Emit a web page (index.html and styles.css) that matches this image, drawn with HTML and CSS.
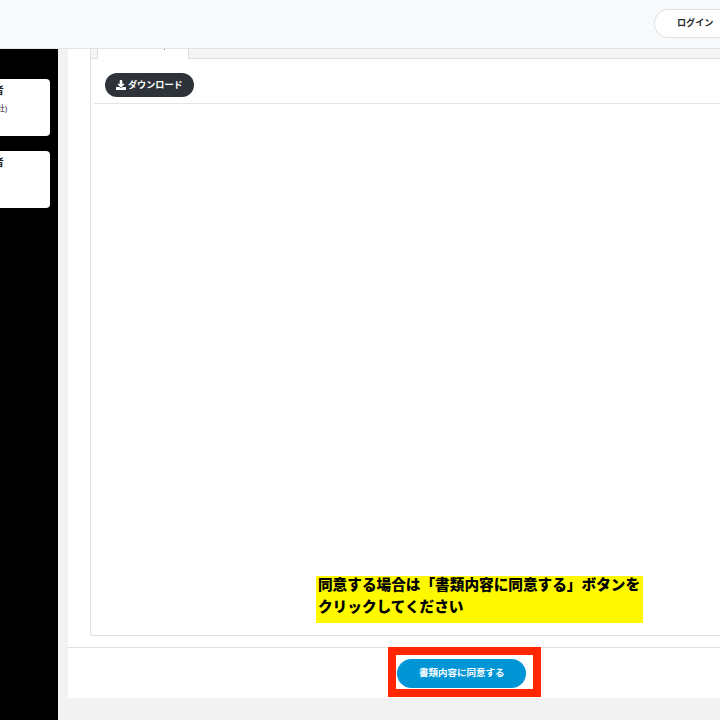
FILE: index.html
```html
<!DOCTYPE html>
<html lang="ja">
<head>
<meta charset="utf-8">
<title>書類内容の確認</title>
<link rel="stylesheet" href="styles.css">
</head>
<body>
<header class="topbar"><button class="login">ログイン</button></header>
<div class="layout">
  <aside class="sidebar">
    <section class="party"><h2>者</h2><p>社)</p></section>
    <section class="party"><h2>者</h2></section>
  </aside>
  <main class="content">
    <div class="viewer">
      <div class="tabs"><div class="tab"><i class="tab-mark"></i></div></div>
      <div class="toolbar">
        <button class="download">
          <svg viewBox="0 0 512 512" aria-hidden="true"><path fill="currentColor" d="M216 0h80c13 0 24 11 24 24v168h88c18 0 27 21 14 34L270 378c-7 7-20 7-27 0L90 226c-13-13-4-34 14-34h88V24c0-13 11-24 24-24zm296 376v112c0 13-11 24-24 24H24c-13 0-24-11-24-24V376c0-13 11-24 24-24h147l49 49c20 20 52 20 72 0l49-49h147c13 0 24 11 24 24z"/></svg>
          <span>ダウンロード</span>
        </button>
      </div>
      <div class="document">
        <div class="note"><p>同意する場合は「書類内容に同意する」ボタンを<br>クリックしてください</p></div>
      </div>
    </div>
    <footer class="actions"><div class="focus-frame"><button class="agree">書類内容に同意する</button></div></footer>
  </main>
</div>
</body>
</html>
```
FILE: styles.css
```css
* { box-sizing: border-box; }
body {
  margin: 0;
  width: 720px;
  height: 720px;
  overflow: hidden;
  background: #f2f2f2;
  color: #222;
  font-family: "Liberation Sans", "Noto Sans CJK JP", sans-serif;
}
button { border: 0; margin: 0; padding: 0; font: inherit; white-space: nowrap; }
h2, p { margin: 0; }
.topbar {
  display: flex;
  height: 49px;
  padding: 9px 0 0 654px;
  background: #f7f9fb;
  border-bottom: 1px solid #e2e4e6;
}
.login {
  width: 66px;
  height: 29px;
  padding-left: 22px;
  border: 1px solid #dfe2e4;
  border-right: 0;
  border-radius: 15px 0 0 15px;
  background: #fff;
  color: #24282b;
  text-align: left;
  font-size: 9.1px;
  font-weight: 700;
  line-height: 27px;
}
.layout { display: flex; height: 671px; }
.sidebar {
  flex: none;
  width: 57.6px;
  padding-top: 30px;
  background: #000;
}
.party {
  width: 50px;
  height: 57px;
  margin-bottom: 15px;
  padding-top: 5px;
  overflow: hidden;
  border-radius: 0 4px 4px 0;
  background: #fff;
}
.party h2 { margin-left: -6px; font-size: 9.8px; line-height: 14px; }
.party p { margin: 4px 0 0 -3px; font-size: 7.8px; line-height: 14px; }
.content {
  flex: 1;
  min-width: 0;
  height: 649px;
  margin-left: 10.4px;
  background: #fff;
}
.viewer {
  height: 587px;
  margin-left: 22px;
  border: 1px solid #e0e1e2;
  border-width: 0 0 1px 1px;
  border-radius: 0 0 0 3px;
}
.tabs {
  display: flex;
  height: 10px;
  padding-left: 6px;
  background: #f5f5f5;
  border-bottom: 1px solid #dedfe0;
}
.tab {
  width: 92px;
  height: 10px;
  padding-left: 66px;
  border: solid #dedfe0;
  border-width: 0 1px;
  background: #fff;
}
.tab-mark { display: block; width: 1px; height: 1px; background: #777; }
.toolbar {
  height: 45px;
  margin-left: 3px;
  padding: 14px 0 0 11px;
  border-bottom: 1px solid #e4e5e6;
}
.download {
  display: flex;
  align-items: center;
  width: 89px;
  height: 24px;
  padding-left: 11px;
  gap: 2px;
  border-radius: 12px;
  background: #2d3338;
  color: #fff;
  font-size: 9.15px;
  font-weight: 700;
}
.download svg { width: 10px; height: 10px; }
.download span { margin-top: -1px; line-height: 24px; }
.document { display: flex; padding: 471.5px 0 0 225px; }
.note {
  width: 327px;
  height: 47.5px;
  padding-left: 2px;
  background: #fff900;
}
.note p {
  margin-top: -3px;
  color: #000;
  font-family: "Noto Sans CJK JP", sans-serif;
  font-size: 14.65px;
  font-weight: 900;
  line-height: 22px;
  white-space: nowrap;
}
.actions {
  display: flex;
  height: 51px;
  padding-left: 320px;
  margin-top: 11px;
  border-top: 1px solid #e0e1e2;
}
.focus-frame {
  width: 153px;
  height: 50px;
  margin-top: -1px;
  padding: 3.5px 0 0 1px;
  border: 8px solid #ff2600;
}
.agree {
  display: block;
  width: 129.5px;
  height: 29px;
  border-radius: 15px;
  background: #0096d6;
  color: #fff;
  font-size: 9.5px;
  font-weight: 700;
  line-height: 28px;
}
```
